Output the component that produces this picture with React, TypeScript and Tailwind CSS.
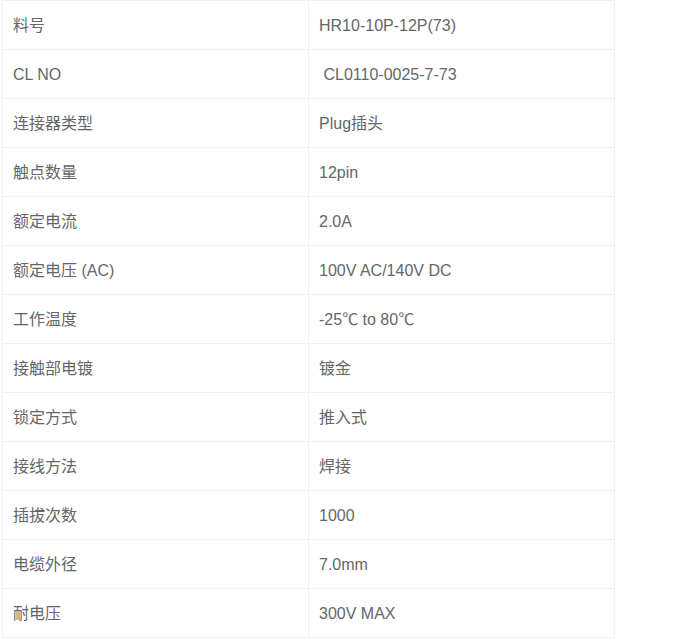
const specs: [string, string][] = [
  ["料号", "HR10-10P-12P(73)"],
  ["CL NO", "\u00a0CL0110-0025-7-73"],
  ["连接器类型", "Plug插头"],
  ["触点数量", "12pin"],
  ["额定电流", "2.0A"],
  ["额定电压 (AC)", "100V AC/140V DC"],
  ["工作温度", "-25℃ to 80℃"],
  ["接触部电镀", "镀金"],
  ["锁定方式", "推入式"],
  ["接线方法", "焊接"],
  ["插拔次数", "1000"],
  ["电缆外径", "7.0mm"],
  ["耐电压", "300V MAX"],
]

export default function App() {
  return (
    <div className="min-h-screen bg-white">
      <div className="ml-[2px] w-[613px] border-l border-t border-[#f0f0f0] font-['Liberation_Sans','Noto_Sans_CJK_SC',sans-serif] text-[16px] text-[#666]">
        {specs.map(([label, value]) => (
          <div key={label} className="grid h-[49px] grid-cols-2 border-b border-[#f0f0f0]">
            <div className="flex items-center border-r border-[#f0f0f0] pl-[10px] pt-[2px]">{label}</div>
            <div className="flex items-center border-r border-[#f0f0f0] pl-[10px] pt-[2px]">{value}</div>
          </div>
        ))}
      </div>
    </div>
  )
}
